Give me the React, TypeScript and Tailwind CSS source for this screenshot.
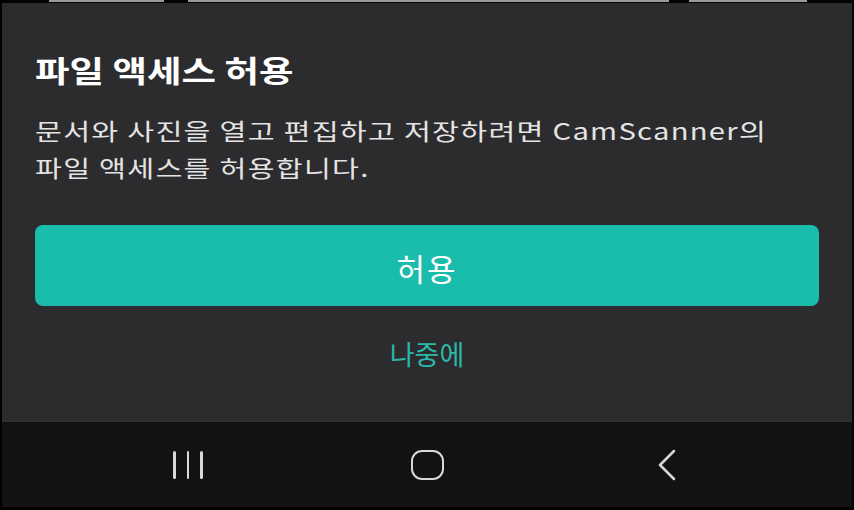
const font = { fontFamily: '"Noto Sans CJK KR", "Noto Sans", Roboto, sans-serif' };

function NavBar() {
  return (
    <div className="flex h-[86px] items-center justify-center gap-[159px] border-t border-[#333335] bg-[#121212]">
      <div className="flex w-[80px] justify-center">
        <div className="flex h-[28px] gap-[11px]">
          <span className="w-[2.5px] rounded-full bg-[#d8d8d8]" />
          <span className="w-[2.5px] rounded-full bg-[#d8d8d8]" />
          <span className="w-[2.5px] rounded-full bg-[#d8d8d8]" />
        </div>
      </div>
      <div className="flex w-[80px] justify-center">
        <div className="h-[30px] w-[33px] rounded-[11px] border-[2.5px] border-[#d8d8d8]" />
      </div>
      <div className="flex w-[80px] justify-center">
        <svg width="20" height="32" viewBox="0 0 20 32" fill="none" className="ml-[2px]">
          <polyline points="17,2 3,16 17,30" stroke="#d8d8d8" strokeWidth="2.5" strokeLinecap="round" strokeLinejoin="round" />
        </svg>
      </div>
    </div>
  );
}

export default function App() {
  return (
    <div className="flex h-[510px] w-[854px] flex-col overflow-hidden bg-black px-[2px] pb-[3px]" style={font}>
      <div className="flex h-[3px] items-start">
        <span className="ml-[47px] h-[2px] w-[115px] bg-[#9a9a9a]" />
        <span className="ml-[24px] h-[2px] w-[481px] bg-[#9a9a9a]" />
        <span className="ml-[20px] h-[2px] w-[118px] bg-[#9a9a9a]" />
      </div>
      <div className="flex flex-1 flex-col bg-[#2c2c2e] px-[33px] pt-[48px]">
        <h1 className="origin-left scale-x-[1.25] self-start text-[30px] font-bold leading-[36px] text-white">파일 액세스 허용</h1>
        <p className="mt-[25px] origin-left scale-x-[1.27] self-start text-[23px] leading-[37px] tracking-[1px] text-[#e4e4e4]">
          문서와 사진을 열고 편집하고 저장하려면 CamScanner의
          <br />
          파일 액세스를 허용합니다.
        </p>
        <button className="mt-[39px] flex h-[81px] w-full items-center justify-center rounded-[8px] bg-[#1abcab] pt-[6px] text-[31px] tracking-[2px] text-white">
          허용
        </button>
        <button className="mt-[31px] self-center text-[27px] leading-[34px] text-[#2bb8a8]">나중에</button>
      </div>
      <NavBar />
    </div>
  );
}
